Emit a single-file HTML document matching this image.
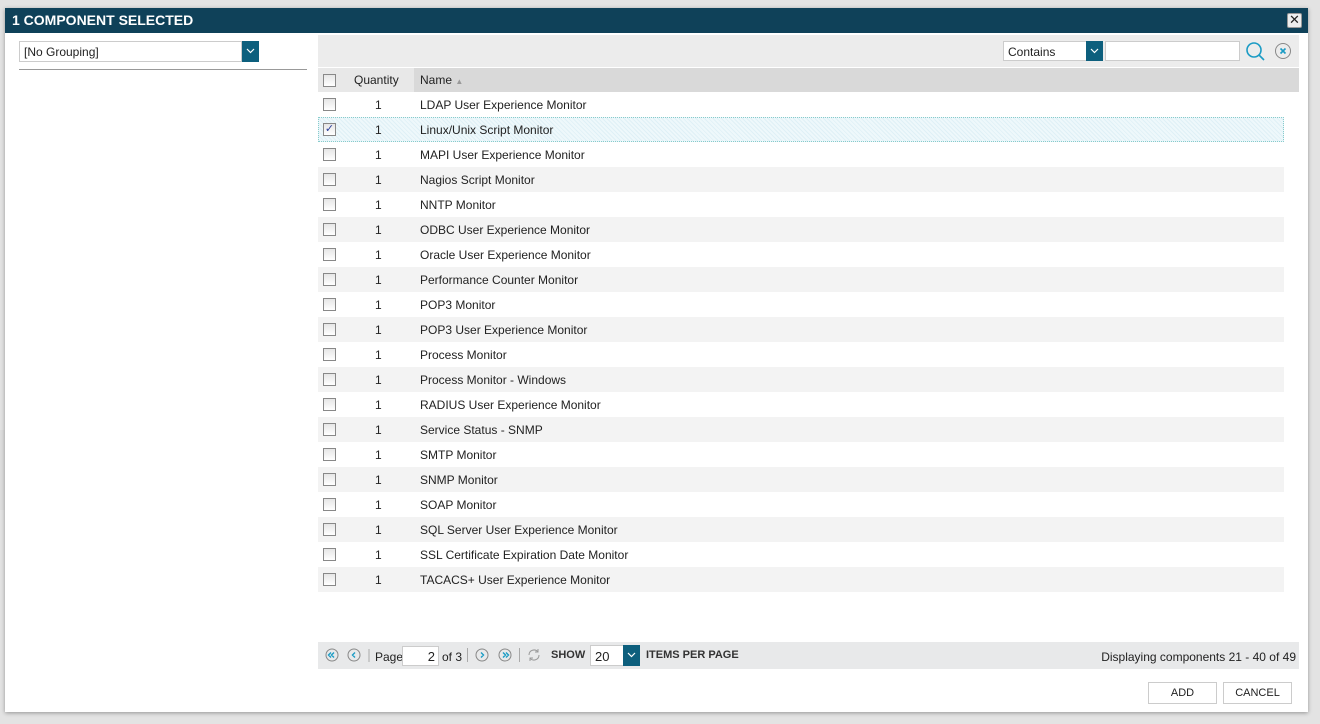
<!DOCTYPE html>
<html><head><meta charset="utf-8"><style>
*{box-sizing:border-box;margin:0;padding:0}
body{width:1320px;height:724px;background:#e3e3e3;font-family:"Liberation Sans",sans-serif;font-size:12px;color:#222;position:relative;overflow:hidden}
.abs{position:absolute}
.dlg{left:5px;top:8px;width:1303px;height:704px;background:#fff;box-shadow:0 1px 4px rgba(0,0,0,.35)}
.title{left:5px;top:8px;width:1303px;height:25px;background:#0f4159;color:#fff;font-weight:bold;font-size:14px;line-height:25px;padding-left:7px}
.close{left:1287px;top:13px;width:15px;height:15px;background:#eee;border:1px solid #999;border-radius:2px;font-size:13px;line-height:12px;text-align:center;color:#222}
.sel{border:1px solid #ccc;background:#fff;height:21px;line-height:20px;padding-left:4px;font-size:12px}
.dd{width:17px;height:21px;background:#0d5f7d}
.dd svg{position:absolute;left:4px;top:7px}
.row{left:318px;width:966px;height:25px;line-height:26px}
.cb{position:absolute;left:5px;top:6px;width:13px;height:13px;border:1px solid #888;background:linear-gradient(#e6e6e6,#fff)}
.q{position:absolute;left:57px}
.n{position:absolute;left:102px}
.g{background:#f3f3f3}
.btn{top:682px;height:22px;border:1px solid #ccc;background:#fff;text-align:center;line-height:21px;font-size:11px}
</style></head><body>
<div class="abs" style="left:0;top:430px;width:5px;height:80px;background:#ddd"></div>
<div class="abs dlg"></div>
<div class="abs title">1 COMPONENT SELECTED</div>
<div class="abs close">✕</div>
<div class="abs sel" style="left:19px;top:41px;width:223px">[No Grouping]</div>
<div class="abs dd" style="left:242px;top:41px"><svg width="9" height="6"><path d="M1 1l3.5 3.5L8 1" fill="none" stroke="#fff" stroke-width="1.2"/></svg></div>
<div class="abs" style="left:19px;top:69px;width:288px;height:1px;background:#999"></div>

<div class="abs" style="left:318px;top:35px;width:981px;height:32px;background:#ececec"></div>
<div class="abs sel" style="left:1003px;top:41px;width:84px;height:20px;line-height:21px">Contains</div>
<div class="abs dd" style="left:1086px;top:41px;height:20px"><svg width="9" height="6"><path d="M1 1l3.5 3.5L8 1" fill="none" stroke="#fff" stroke-width="1.2"/></svg></div>
<div class="abs sel" style="left:1105px;top:41px;width:135px;height:20px"></div>
<svg class="abs" style="left:1245px;top:41px" width="22" height="20"><circle cx="9" cy="9" r="7" fill="none" stroke="#1a9bc4" stroke-width="1.6"/><path d="M14 14l5 5" stroke="#1a9bc4" stroke-width="1.6"/></svg>
<svg class="abs" style="left:1274px;top:42px" width="18" height="18"><circle cx="9" cy="9" r="7.5" fill="none" stroke="#888" stroke-width="1"/><path d="M6.5 6.5l5 5M11.5 6.5l-5 5" stroke="#1a9bc4" stroke-width="1.6"/></svg>

<div class="abs" style="left:318px;top:68px;width:981px;height:24px;background:#d9d9d9"></div>
<div class="abs" style="left:318px;top:68px;width:96px;height:24px;background:#e8e8e8"></div>
<div class="abs row" style="top:68px;height:24px;line-height:25px"><div class="cb"></div><span class="q" style="left:36px">Quantity</span><span class="n">Name <span style="color:#999;font-size:8px">▲</span></span></div>

<div class="abs row" style="top:92px"><div class="cb"></div><span class="q">1</span><span class="n">LDAP User Experience Monitor</span></div>
<div class="abs row" style="top:117px;border:1px dotted #8cc;background:repeating-linear-gradient(45deg,#dff0f6 0 1px,#eef8fb 1px 3px)"><div class="cb" style="left:4px;top:5px;color:#2a3f9a;font-size:11px;line-height:11px;text-align:center">✓</div><span class="q" style="left:56px;line-height:24px">1</span><span class="n" style="left:101px;line-height:24px">Linux/Unix Script Monitor</span></div>
<div class="abs row" style="top:142px"><div class="cb"></div><span class="q">1</span><span class="n">MAPI User Experience Monitor</span></div>
<div class="abs row g" style="top:167px"><div class="cb"></div><span class="q">1</span><span class="n">Nagios Script Monitor</span></div>
<div class="abs row" style="top:192px"><div class="cb"></div><span class="q">1</span><span class="n">NNTP Monitor</span></div>
<div class="abs row g" style="top:217px"><div class="cb"></div><span class="q">1</span><span class="n">ODBC User Experience Monitor</span></div>
<div class="abs row" style="top:242px"><div class="cb"></div><span class="q">1</span><span class="n">Oracle User Experience Monitor</span></div>
<div class="abs row g" style="top:267px"><div class="cb"></div><span class="q">1</span><span class="n">Performance Counter Monitor</span></div>
<div class="abs row" style="top:292px"><div class="cb"></div><span class="q">1</span><span class="n">POP3 Monitor</span></div>
<div class="abs row g" style="top:317px"><div class="cb"></div><span class="q">1</span><span class="n">POP3 User Experience Monitor</span></div>
<div class="abs row" style="top:342px"><div class="cb"></div><span class="q">1</span><span class="n">Process Monitor</span></div>
<div class="abs row g" style="top:367px"><div class="cb"></div><span class="q">1</span><span class="n">Process Monitor - Windows</span></div>
<div class="abs row" style="top:392px"><div class="cb"></div><span class="q">1</span><span class="n">RADIUS User Experience Monitor</span></div>
<div class="abs row g" style="top:417px"><div class="cb"></div><span class="q">1</span><span class="n">Service Status - SNMP</span></div>
<div class="abs row" style="top:442px"><div class="cb"></div><span class="q">1</span><span class="n">SMTP Monitor</span></div>
<div class="abs row g" style="top:467px"><div class="cb"></div><span class="q">1</span><span class="n">SNMP Monitor</span></div>
<div class="abs row" style="top:492px"><div class="cb"></div><span class="q">1</span><span class="n">SOAP Monitor</span></div>
<div class="abs row g" style="top:517px"><div class="cb"></div><span class="q">1</span><span class="n">SQL Server User Experience Monitor</span></div>
<div class="abs row" style="top:542px"><div class="cb"></div><span class="q">1</span><span class="n">SSL Certificate Expiration Date Monitor</span></div>
<div class="abs row g" style="top:567px"><div class="cb"></div><span class="q">1</span><span class="n">TACACS+ User Experience Monitor</span></div>

<div class="abs" style="left:318px;top:642px;width:981px;height:27px;background:#e8e9ea"></div>
<svg class="abs" style="left:324px;top:647px" width="200" height="16">
<g fill="none" stroke="#888" stroke-width="1"><circle cx="8" cy="8" r="6"/><circle cx="30" cy="8" r="6"/><circle cx="158" cy="8" r="6"/><circle cx="181" cy="8" r="6"/></g>
<g fill="none" stroke="#1a9bc4" stroke-width="1.4"><path d="M7 5.5l-2.5 2.5 2.5 2.5M10 5.5l-2.5 2.5 2.5 2.5M31 5.5l-2.5 2.5 2.5 2.5M157 5.5l2.5 2.5-2.5 2.5M179 5.5l2.5 2.5-2.5 2.5M182 5.5l2.5 2.5-2.5 2.5"/></g>
<path d="M45 2v13" stroke="#aaa"/></svg>
<div class="abs" style="left:375px;top:650px;font-size:12px">Page</div>
<div class="abs sel" style="left:402px;top:646px;width:37px;height:20px;text-align:right;padding-right:3px;font-size:13px">2</div>
<div class="abs" style="left:442px;top:650px">of 3</div>
<div class="abs" style="left:467px;top:648px;width:1px;height:14px;background:#aaa"></div>
<div class="abs" style="left:519px;top:648px;width:1px;height:14px;background:#aaa"></div>
<svg class="abs" style="left:526px;top:647px" width="16" height="16"><path d="M3 8a5 5 0 0 1 9-3M13 8a5 5 0 0 1-9 3M12 2v3h-3M4 14v-3h3" fill="none" stroke="#999" stroke-width="1"/></svg>
<div class="abs" style="left:551px;top:649px;font-weight:bold;font-size:11px;color:#333">SHOW</div>
<div class="abs sel" style="left:590px;top:645px;width:34px;height:21px;font-size:13px;line-height:22px">20</div>
<div class="abs dd" style="left:623px;top:645px"><svg width="9" height="6"><path d="M1 1l3.5 3.5L8 1" fill="none" stroke="#fff" stroke-width="1.2"/></svg></div>
<div class="abs" style="left:646px;top:649px;font-weight:bold;font-size:11px;color:#333">ITEMS PER PAGE</div>
<div class="abs" style="right:24px;top:650px;font-size:12px;white-space:nowrap">Displaying components 21 - 40 of 49</div>

<div class="abs btn" style="left:1148px;width:69px">ADD</div>
<div class="abs btn" style="left:1223px;width:69px">CANCEL</div>
</body></html>
